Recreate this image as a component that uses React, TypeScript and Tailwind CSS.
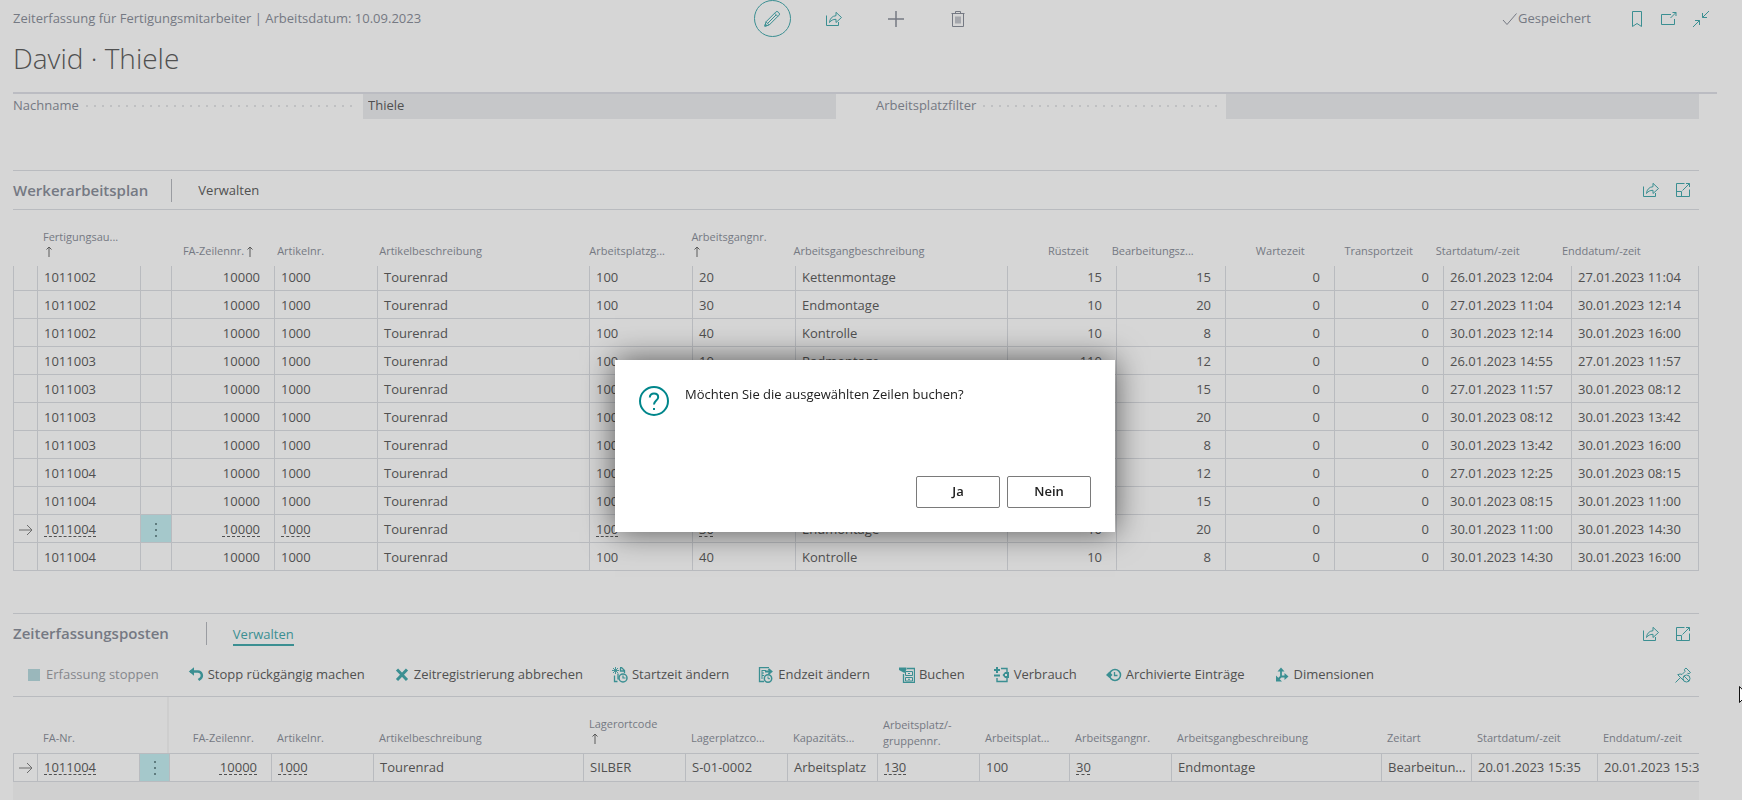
import React from "react";
import clsx from "clsx";

type IconProps = { className?: string };

function PencilIcon() {
  return (
    <svg width="18" height="18" viewBox="0 0 18 18" fill="none" stroke="currentColor">
      <path d="M1.8 16.2l1.2-4.4L12.8 2a1.6 1.6 0 0 1 2.3 0l.9.9a1.6 1.6 0 0 1 0 2.3L6.2 15z" />
      <path d="M3 11.8L6.2 15M11.6 3.2l3.2 3.2M5 13l8-8M1.8 16.2l2.2-.6-1.6-1.6z" />
    </svg>
  );
}

function ShareIcon() {
  return (
    <svg width="18" height="18" viewBox="0 0 18 18" fill="none" stroke="currentColor">
      <path d="M1.500 5.500v10h12v-3.500" />
      <path d="M4.500 12.500c.4-4 2.600-6.500 6.500-6.800V2.300l5.500 5.200-5.500 5V9.300C8 9.300 6 10.400 4.500 12.500z" />
    </svg>
  );
}

function PlusIcon() {
  return (
    <svg width="18" height="18" viewBox="0 0 18 18" fill="none" stroke="currentColor" strokeWidth="1.500">
      <path d="M9 1v16M1 9h16" />
    </svg>
  );
}

function TrashIcon() {
  return (
    <svg width="18" height="18" viewBox="0 0 18 18" fill="none" stroke="currentColor">
      <path d="M2.500 3.500h13M6.500 3.500v-2h5v2M3.500 3.500v13h11v-13M7 6.500v7M9 6.500v7M11 6.500v7" />
    </svg>
  );
}

function CheckIcon() {
  return (
    <svg width="16" height="14" viewBox="0 0 16 14" fill="none" stroke="currentColor">
      <path d="M1 8l4 4.500L14.500 1.500" />
    </svg>
  );
}

function BookmarkIcon() {
  return (
    <svg width="18" height="18" viewBox="0 0 18 18" fill="none" stroke="currentColor">
      <path d="M4.500 1.500h9v15L9 13.500l-4.500 3z" />
    </svg>
  );
}

function PopOutIcon() {
  return (
    <svg width="18" height="18" viewBox="0 0 18 18" fill="none" stroke="currentColor">
      <path d="M11 4.500H1.500v10h13V9M10.500 8L16 2.500M12.500 2.500H16V6" />
    </svg>
  );
}

function CollapseIcon() {
  return (
    <svg width="18" height="18" viewBox="0 0 18 18" fill="none" stroke="currentColor">
      <path d="M17 1l-6.500 6.500M10.500 3v4.500H15M1 17l6.500-6.500M3 10.500h4.500V15" />
    </svg>
  );
}

function ExpandIcon() {
  return (
    <svg width="18" height="18" viewBox="0 0 18 18" fill="none" stroke="currentColor">
      <path d="M10.500 2.500h-8v13h13V8.500M2.500 10.500h5v5M8.500 9.500l7-7M12 2.500h3.500V6" />
    </svg>
  );
}

function UnpinIcon() {
  return (
    <svg width="18" height="18" viewBox="0 0 18 18" fill="none" stroke="currentColor">
      <path d="M1.500 16.500l5-5M3.500 8.500l6 6M4 8.700c1.400-.8 2.800-.8 4-.2l3-3-.6-2L12 2l4.500 4.500-1.500 1.200-1.600-.4" />
      <circle cx="12.500" cy="12.500" r="3.500" />
      <path d="M10 10l5 5" />
    </svg>
  );
}

function StopIcon() {
  return (
    <svg width="16" height="16" viewBox="0 0 16 16" fill="currentColor">
      <path d="M2 2h12v12H2z" />
    </svg>
  );
}

function UndoIcon() {
  return (
    <svg width="16" height="16" viewBox="0 0 16 16" fill="none" stroke="currentColor" strokeWidth="2">
      <path d="M2 4.500h8a4 4 0 0 1 2.500 7L10.500 13" strokeWidth="2.400" />
      <path d="M6 .2v8.600L.8 4.500z" fill="currentColor" stroke="none" />
    </svg>
  );
}

function CancelIcon() {
  return (
    <svg width="16" height="16" viewBox="0 0 16 16" fill="none" stroke="currentColor" strokeWidth="3">
      <path d="M3 2.500l10 10.500M13 2.500L3 13" />
    </svg>
  );
}

function StartTimeIcon() {
  return (
    <svg width="16" height="16" viewBox="0 0 16 16" fill="none" stroke="currentColor">
      <path d="M3.500 0v7M0 3.500h7M1 1l5 5M6 1L1 6" strokeWidth="0.900" />
      <path d="M2.500 8.500v6h3M8 .5h1.500l3 3V6M8.500 1v3h4M6 6.500v6" strokeWidth="1.300" />
      <circle cx="11" cy="11" r="4" strokeWidth="1.500" />
      <path d="M11 8.500V11h2.500" strokeWidth="1.200" />
    </svg>
  );
}

function EndTimeIcon() {
  return (
    <svg width="16" height="16" viewBox="0 0 16 16" fill="none" stroke="currentColor">
      <path d="M6 14.500H1.500v-14h9.500" strokeWidth="1.300" />
      <path d="M4 3v9M4 3.500h4M4 6h2M4 8.500h2" />
      <path d="M7 4.500h6M10.500 2l3 2.500-3 2.500" strokeWidth="1.800" />
      <circle cx="10" cy="11.500" r="3.700" strokeWidth="1.500" />
      <path d="M10 9.500v2.200h2" />
    </svg>
  );
}

function PostIcon() {
  return (
    <svg width="16" height="16" viewBox="0 0 16 16" fill="none" stroke="currentColor">
      <path d="M0 .5h7.500v2L5.500 6 0 3z" fill="currentColor" stroke="none" />
      <path d="M8 1.500h7.500v14h-11V7" strokeWidth="1.300" />
      <path d="M6.500 8V4.500h7v4h-7zM6.500 10.500h7v3.500h-7zM9 6.500h2M9 12.300h2" />
    </svg>
  );
}

function ConsumptionIcon() {
  return (
    <svg width="16" height="16" viewBox="0 0 16 16" fill="none" stroke="currentColor">
      <path d="M3 0v6M0 3h6M0 8.500h6" strokeWidth="2" />
      <path d="M7 1.500h6V5M13 11v3.500H3V11" strokeWidth="1.400" />
      <path d="M8.500 8L11 5h4v6h-4zm2.500-1v2h2V7z" fill="currentColor" fillRule="evenodd" stroke="none" />
    </svg>
  );
}

function HistoryIcon() {
  return (
    <svg width="16" height="16" viewBox="0 0 16 16" fill="none" stroke="currentColor">
      <circle cx="9" cy="8" r="5.500" strokeWidth="1.500" />
      <path d="M8.500 5v3.500h3" strokeWidth="1.300" />
      <path d="M0 8l3.500-3.500L6.500 8 3.500 11z" fill="currentColor" stroke="none" />
    </svg>
  );
}

function DimensionsIcon() {
  return (
    <svg width="16" height="16" viewBox="0 0 16 16" fill="none" stroke="currentColor" strokeWidth="1.500">
      <path d="M7 3v6.500h5M7 9.500L4 12.500" strokeWidth="1.800" />
      <path d="M7 .5L10.500 4.500h-7zM14.500 9.500l-4 3.500V6zM2 8.500V14.500H8z" fill="currentColor" stroke="none" />
    </svg>
  );
}

function SortArrow({ className }: IconProps) {
  return (
    <svg className={className} width="8" height="11" viewBox="0 0 8 11" fill="none" stroke="#5a5a5a">
      <path d="M4 11V1M1.500 3.500L4 1l2.500 2.500" />
    </svg>
  );
}

function RowArrow() {
  return (
    <svg className="shrink-0" width="14" height="12" viewBox="0 0 14 12" fill="none" stroke="#6c6c6c">
      <path d="M0 6h12.500M8 1l5 5-5 5" />
    </svg>
  );
}

function MoreDots() {
  return (
    <svg width="4" height="16" viewBox="0 0 4 16" fill="#5f7c7e">
      <path d="M1 1h2v2H1zM1 7h2v2H1zM1 13h2v2H1z" />
    </svg>
  );
}

const planHeaders: { label: string; right?: boolean; sort?: "below" | "beside" }[] = [
  { label: "" },
  { label: "Fertigungsau...", sort: "below" },
  { label: "" },
  { label: "FA-Zeilennr.", right: true, sort: "beside" },
  { label: "Artikelnr." },
  { label: "Artikelbeschreibung" },
  { label: "Arbeitsplatzg..." },
  { label: "Arbeitsgangnr.", sort: "below" },
  { label: "Arbeitsgangbeschreibung" },
  { label: "Rüstzeit", right: true },
  { label: "Bearbeitungsz..." },
  { label: "Wartezeit", right: true },
  { label: "Transportzeit", right: true },
  { label: "Startdatum/-zeit" },
  { label: "Enddatum/-zeit" },
];

// order, operation, description, setup, run, start, end
const planRows = [
  ["1011002", "20", "Kettenmontage", "15", "15", "26.01.2023 12:04", "27.01.2023 11:04"],
  ["1011002", "30", "Endmontage", "10", "20", "27.01.2023 11:04", "30.01.2023 12:14"],
  ["1011002", "40", "Kontrolle", "10", "8", "30.01.2023 12:14", "30.01.2023 16:00"],
  ["1011003", "10", "Radmontage", "110", "12", "26.01.2023 14:55", "27.01.2023 11:57"],
  ["1011003", "20", "Kettenmontage", "15", "15", "27.01.2023 11:57", "30.01.2023 08:12"],
  ["1011003", "30", "Endmontage", "10", "20", "30.01.2023 08:12", "30.01.2023 13:42"],
  ["1011003", "40", "Kontrolle", "10", "8", "30.01.2023 13:42", "30.01.2023 16:00"],
  ["1011004", "10", "Radmontage", "110", "12", "27.01.2023 12:25", "30.01.2023 08:15"],
  ["1011004", "20", "Kettenmontage", "15", "15", "30.01.2023 08:15", "30.01.2023 11:00"],
  ["1011004", "30", "Endmontage", "10", "20", "30.01.2023 11:00", "30.01.2023 14:30"],
  ["1011004", "40", "Kontrolle", "10", "8", "30.01.2023 14:30", "30.01.2023 16:00"],
];
const selectedPlanRow = 9;

const entryHeaders: { label: string; right?: boolean; sort?: "below" | "beside"; wrap?: string }[] = [
  { label: "" },
  { label: "FA-Nr." },
  { label: "" },
  { label: "FA-Zeilennr.", right: true },
  { label: "Artikelnr." },
  { label: "Artikelbeschreibung" },
  { label: "Lagerortcode", sort: "below" },
  { label: "Lagerplatzco..." },
  { label: "Kapazitäts..." },
  { label: "Arbeitsplatz/-", wrap: "gruppennr." },
  { label: "Arbeitsplat..." },
  { label: "Arbeitsgangnr." },
  { label: "Arbeitsgangbeschreibung" },
  { label: "Zeitart" },
  { label: "Startdatum/-zeit" },
  { label: "Enddatum/-zeit" },
];

const actions = [
  { label: "Erfassung stoppen", icon: <StopIcon />, disabled: true },
  { label: "Stopp rückgängig machen", icon: <UndoIcon /> },
  { label: "Zeitregistrierung abbrechen", icon: <CancelIcon /> },
  { label: "Startzeit ändern", icon: <StartTimeIcon /> },
  { label: "Endzeit ändern", icon: <EndTimeIcon /> },
  { label: "Buchen", icon: <PostIcon /> },
  { label: "Verbrauch", icon: <ConsumptionIcon /> },
  { label: "Archivierte Einträge", icon: <HistoryIcon /> },
  { label: "Dimensionen", icon: <DimensionsIcon /> },
];

function HeaderCell({
  label,
  right,
  sort,
  wrap,
}: {
  label: string;
  right?: boolean;
  sort?: "below" | "beside";
  wrap?: string;
}) {
  return (
    <th
      className={clsx(
        "flex min-w-0 items-end whitespace-nowrap pl-[6px] text-left font-normal",
        wrap ? "pb-1 leading-4" : "pb-2 leading-[14px]",
        right && "justify-end pr-[17px]"
      )}
    >
      <div className={sort === "beside" ? "flex items-center gap-0.5" : ""}>
        {label}
        {wrap && <div>{wrap}</div>}
        {sort === "beside" && <SortArrow />}
        {sort === "below" && (
          <div className="flex h-[14px] items-center pl-0.5">
            <SortArrow />
          </div>
        )}
      </div>
    </th>
  );
}

function Cell({
  children,
  right,
  center,
  link,
  className,
}: {
  children?: React.ReactNode;
  right?: boolean;
  center?: boolean;
  link?: boolean;
  className?: string;
}) {
  return (
    <td
      className={clsx(
        "flex min-w-0 items-center overflow-hidden whitespace-nowrap border-l border-[#b9bbbf]",
        center ? "justify-center" : "pl-[6px]",
        right && "justify-end pr-[14px]",
        className
      )}
    >
      {link ? (
        <a href="#" className="underline decoration-dashed decoration-1 underline-offset-2">
          {children}
        </a>
      ) : (
        children
      )}
    </td>
  );
}

function PlanTable() {
  return (
    <table className="block w-full">
      <thead className="block text-[11px] text-[#757983]">
        <tr className="grid h-14 grid-cols-[24fr_102fr_30fr_102fr_102fr_210fr_102fr_102fr_210fr_108fr_108fr_108fr_108fr_126fr_143fr]">
          {planHeaders.map((header, i) => (
            <HeaderCell key={i} {...header} />
          ))}
        </tr>
      </thead>
      <tbody className="block border-r border-[#b9bbbf]">
        {planRows.map(([order, op, description, setup, run, start, end], i) => {
          const selected = i === selectedPlanRow;
          return (
            <tr
              key={i}
              className={clsx(
                "grid grid-cols-[24fr_103fr_31fr_103fr_103fr_212fr_103fr_103fr_212fr_109fr_109fr_109fr_109fr_128fr_127fr] border-b border-[#b9bbbf]",
                i === 0 ? "h-[25px]" : "h-7 [&>td]:pt-0.5"
              )}
            >
              <Cell center>{selected && <RowArrow />}</Cell>
              <Cell link={selected}>{order}</Cell>
              <Cell center className={selected ? "bg-[#a5c8cb]" : ""}>
                {selected && (
                  <button aria-label="Weitere Optionen">
                    <MoreDots />
                  </button>
                )}
              </Cell>
              <Cell right link={selected}>
                10000
              </Cell>
              <Cell link={selected}>1000</Cell>
              <Cell>Tourenrad</Cell>
              <Cell link={selected}>100</Cell>
              <Cell link={selected}>{op}</Cell>
              <Cell>{description}</Cell>
              <Cell right>{setup}</Cell>
              <Cell right>{run}</Cell>
              <Cell right>0</Cell>
              <Cell right>0</Cell>
              <Cell>{start}</Cell>
              <Cell>{end}</Cell>
            </tr>
          );
        })}
      </tbody>
    </table>
  );
}

function EntryTable() {
  return (
    <table className="block w-full">
      <thead className="block text-[11px] text-[#757983]">
        <tr className="grid h-14 grid-cols-[24fr_102fr_30fr_102fr_102fr_210fr_102fr_102fr_90fr_102fr_90fr_102fr_210fr_90fr_126fr_102fr] [&>th:nth-child(3)]:border-r-2 [&>th:nth-child(3)]:border-[#cecece]">
          {entryHeaders.map((header, i) => (
            <HeaderCell key={i} {...header} />
          ))}
        </tr>
      </thead>
      <tbody className="block">
        <tr className="grid h-[29px] grid-cols-[24fr_102fr_30fr_102fr_102fr_210fr_102fr_102fr_90fr_102fr_90fr_102fr_210fr_90fr_126fr_102fr] border-y border-[#b9bbbf]">
          <Cell center>
            <RowArrow />
          </Cell>
          <Cell link>1011004</Cell>
          <Cell center className="bg-[#a5c8cb]">
            <button aria-label="Weitere Optionen">
              <MoreDots />
            </button>
          </Cell>
          <Cell right link>
            10000
          </Cell>
          <Cell link>1000</Cell>
          <Cell>Tourenrad</Cell>
          <Cell>SILBER</Cell>
          <Cell>S-01-0002</Cell>
          <Cell>Arbeitsplatz</Cell>
          <Cell link>130</Cell>
          <Cell>100</Cell>
          <Cell link>30</Cell>
          <Cell>Endmontage</Cell>
          <Cell>Bearbeitun...</Cell>
          <Cell>20.01.2023 15:35</Cell>
          <Cell>20.01.2023 15:35</Cell>
        </tr>
      </tbody>
    </table>
  );
}

function Field({ id, label, value }: { id: string; label: string; value: string }) {
  return (
    <div className="flex h-[25px]">
      <label htmlFor={id} className="flex w-[350px] items-center gap-1 pb-0.5 text-[#757983]">
        {label}
        <span className="mr-2 h-0.5 flex-1 bg-[linear-gradient(to_right,transparent_3px,#bfc0c2_3px,#bfc0c2_5px,transparent_5px)] bg-[length:8px_2px]" />
      </label>
      <input
        id={id}
        readOnly
        value={value}
        className="min-w-0 flex-1 bg-[#c6c7c9] px-[5px] pb-0.5 outline-none"
      />
    </div>
  );
}

function SectionIcons() {
  return (
    <div className="ml-auto flex gap-[14px] pr-[7px] text-[#3b8f92]">
      <button aria-label="Teilen">
        <ShareIcon />
      </button>
      <button aria-label="Vergrößern">
        <ExpandIcon />
      </button>
    </div>
  );
}

function ConfirmDialog() {
  return (
    <div className="fixed inset-0 flex items-start justify-center pr-3 pt-[360px]">
      <div
        role="dialog"
        aria-labelledby="confirm-text"
        className="flex h-[172px] w-[500px] flex-col justify-between bg-white p-6 text-[#212121] shadow-[0_0_30px_rgba(0,0,0,0.6)]"
      >
        <div className="flex gap-4">
          <svg className="mt-0.5" width="30" height="30" viewBox="0 0 30 30" fill="none" stroke="#00868b">
            <circle cx="15" cy="15" r="14" strokeWidth="2" />
            <path d="M10.800 11.500c0-2.500 1.800-3.900 4.200-3.900 2.500 0 4.200 1.500 4.200 3.600 0 3.300-4.200 3.500-4.200 7.300" strokeWidth="2" />
            <path d="M14 22h2v2h-2z" fill="#00868b" stroke="none" />
          </svg>
          <p id="confirm-text" className="leading-5">
            Möchten Sie die ausgewählten Zeilen buchen?
          </p>
        </div>
        <div className="flex justify-end gap-[7px]">
          <button className="h-8 w-[84px] rounded-xs border border-[#7a7a7a] font-semibold">Ja</button>
          <button className="h-8 w-[84px] rounded-xs border border-[#7a7a7a] font-semibold">Nein</button>
        </div>
      </div>
    </div>
  );
}

function App() {
  return (
    <div className="flex h-screen flex-col overflow-hidden bg-[#d6d6d6] font-['Open_Sans','Noto_Sans',sans-serif] text-[13px] text-[#505050]">
      <header className="ml-[13px] mr-[25px] border-b-2 border-[#bbbcc2]">
        <div className="grid h-[37px] grid-cols-[1fr_auto_1fr] items-center text-[#757983]">
          <span>Zeiterfassung für Fertigungsmitarbeiter | Arbeitsdatum: 10.09.2023</span>
          <div className="flex gap-[25px]">
            <button
              aria-label="Bearbeiten"
              className="flex size-[37px] items-center justify-center rounded-full border border-[#3b8f92] text-[#3b8f92]"
            >
              <PencilIcon />
            </button>
            <button aria-label="Teilen" className="flex size-[37px] items-center justify-center text-[#3b8f92]">
              <ShareIcon />
            </button>
            <button aria-label="Neu" className="flex size-[37px] items-center justify-center">
              <PlusIcon />
            </button>
            <button aria-label="Löschen" className="flex size-[37px] items-center justify-center">
              <TrashIcon />
            </button>
          </div>
          <div className="flex items-center justify-end pr-[7px]">
            <CheckIcon />
            <span className="mr-[37px]">Gespeichert</span>
            <div className="flex gap-[14px] text-[#3b8f92]">
              <button aria-label="Lesezeichen">
                <BookmarkIcon />
              </button>
              <button aria-label="In neuem Fenster öffnen">
                <PopOutIcon />
              </button>
              <button aria-label="Verkleinern">
                <CollapseIcon />
              </button>
            </div>
          </div>
        </div>
        <h1 className="h-[55px] text-[28px] font-light leading-[42px]">David · Thiele</h1>
      </header>

      <main className="ml-[13px] mr-[43px] flex flex-1 flex-col">
        <div className="mb-[51px] grid grid-cols-2 gap-10">
          <Field id="nachname" label="Nachname" value="Thiele" />
          <Field id="arbeitsplatzfilter" label="Arbeitsplatzfilter" value="" />
        </div>

        <section className="mb-[42px]">
          <div className="flex h-10 items-center border-y border-[#b9bbbf]">
            <h2 className="text-[15px] font-semibold text-[#757983]">Werkerarbeitsplan</h2>
            <div className="ml-[23px] mr-[26px] h-[23px] w-px bg-[#9a9ca1]" />
            <button className="pt-0.5">Verwalten</button>
            <SectionIcons />
          </div>
          <PlanTable />
        </section>

        <section className="flex flex-1 flex-col">
          <div className="flex h-10 items-center border-t border-[#b9bbbf]">
            <h2 className="text-[15px] font-semibold text-[#757983]">Zeiterfassungsposten</h2>
            <div className="ml-[37px] mr-[26px] h-[23px] w-px bg-[#9a9ca1]" />
            <button className="border-b-2 border-[#3b8f92] pt-1 text-[#3b8f92]">Verwalten</button>
            <SectionIcons />
          </div>
          <div className="flex h-11 items-center gap-[29px] border-b border-[#b9bbbf] pl-[13px]">
            {actions.map(({ label, icon, disabled }) => (
              <button
                key={label}
                disabled={disabled}
                className={clsx("flex items-center gap-1 whitespace-nowrap", disabled && "text-[#85878c]")}
              >
                <span className={disabled ? "text-[#9ab7bb]" : "text-[#3b8f92]"}>{icon}</span>
                {label}
              </button>
            ))}
            <button aria-label="Lösen" className="ml-auto pr-[7px] text-[#3b8f92]">
              <UnpinIcon />
            </button>
          </div>
          <EntryTable />
          <div className="flex-1 bg-[#d0d0d0]" />
        </section>
      </main>

      <ConfirmDialog />

      {/* mouse pointer, half outside the window */}
      <svg className="fixed right-0 top-[686px]" width="3" height="18" viewBox="0 0 3 18" fill="#fff" stroke="#111">
        <path d="M.5 .5v16l4-4 4-3.500z" />
      </svg>
    </div>
  );
}

export default App;
